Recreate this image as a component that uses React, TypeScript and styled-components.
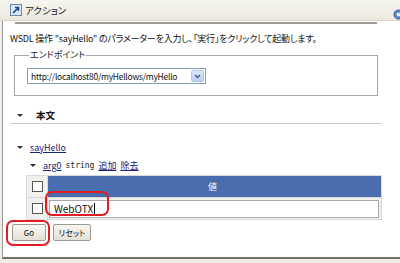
import styled, { createGlobalStyle } from "styled-components";

const GlobalStyle = createGlobalStyle`
  html, body {
    margin: 0;
    padding: 0;
    background: #ffffff;
  }
  body {
    font-family: "Noto Sans CJK JP", "DejaVu Sans", sans-serif;
    font-size: 9px;
    color: #111;
    font-feature-settings: "palt";
  }
`;

const Window = styled.div`
  width: 400px;
  height: 263px;
  background: #efede4;
  display: flex;
  flex-direction: column;
  overflow: hidden;
  position: relative;
`;

const TitleBar = styled.div`
  height: 20px;
  flex: none;
  display: flex;
  align-items: center;
  gap: 3px;
  padding-left: 10px;
  background: linear-gradient(#f6f5ef, #ebe9df);
  border-bottom: 1px solid #d9d6c9;
`;

const TitleText = styled.span`
  font-size: 9.5px;
  color: #222;
`;

const CornerIcon = styled.div`
  margin-left: auto;
  margin-right: -4px;
  margin-top: 8px;
  display: flex;
`;

const Panel = styled.div`
  flex: 1;
  margin-left: 2px;
  margin-bottom: 4px;
  background: #ffffff;
  border-left: 1px solid #9a9a9a;
  border-bottom: 2px solid #74726a;
  display: flex;
  flex-direction: column;
  position: relative;
`;

const TopRule = styled.div`
  height: 2px;
  margin: 1px 23px 0 12px;
  background: #9e9c96;
`;

const Description = styled.div`
  margin: 8px 0 0 7px;
  line-height: 14px;
  white-space: nowrap;
  letter-spacing: -0.2px;
`;

const Group = styled.fieldset`
  margin: 4px 22px 0 11px;
  padding: 8px 0 11px 12px;
  border: 1px solid #a7a7a7;
  box-shadow: inset 1px 1px 0 #fff, 1px 1px 0 #fff;
  min-width: 0;

  legend {
    padding: 0 1px;
    margin-left: 2px;
    line-height: 10px;
    color: #222;
  }
`;

const Select = styled.div`
  width: 179px;
  height: 16px;
  box-sizing: border-box;
  border: 1px solid #7f9db9;
  display: flex;
  align-items: center;
  padding-left: 3px;
  background: #fff;
`;

const SelectText = styled.span`
  flex: 1;
  white-space: nowrap;
  overflow: hidden;
  font-size: 8.5px;
  letter-spacing: -0.25px;
`;

const DropButton = styled.div`
  width: 13px;
  height: 12px;
  margin-right: 1px;
  border-radius: 2px;
  background: linear-gradient(#dde7fb, #b9cdf3);
  border: 1px solid #b3c6ea;
  box-sizing: border-box;
  display: flex;
  align-items: center;
  justify-content: center;
`;

const SectionHead = styled.div`
  display: flex;
  align-items: center;
  margin: 11px 18px 0 7px;
  padding: 1px 0 1px 7px;
  height: 14px;
  border-bottom: 1px solid #c9c9c9;
  gap: 10px;
  font-weight: bold;
  font-size: 9.5px;
`;

const TreeRow = styled.div<{ $indent: number; $top: number }>`
  display: flex;
  align-items: center;
  gap: 4px;
  height: 12px;
  margin-top: ${(p) => p.$top}px;
  padding-left: ${(p) => p.$indent}px;
  white-space: nowrap;
`;

const Twistie = styled.span`
  width: 0;
  height: 0;
  border-left: 3px solid transparent;
  border-right: 3px solid transparent;
  border-top: 3px solid #333;
  margin-right: 3px;
`;

const LinkText = styled.span`
  color: #1b237a;
  text-decoration: underline;
  text-underline-offset: 1px;
`;

const PlainText = styled.span`
  font-family: "DejaVu Sans Mono", monospace;
  font-size: 8px;
  color: #222;
`;

const Table = styled.div`
  margin: 4px 18px 0 23px;
  display: grid;
  grid-template-columns: 20px 1fr;
  grid-template-rows: 21px 21px;
  column-gap: 1px;
  row-gap: 1px;
  background: #d8d8d8;
  border: 1px solid #d8d8d8;
`;

const CheckCell = styled.div`
  background: #f0f0ec;
  display: flex;
  align-items: center;
  justify-content: center;
`;

const Check = styled.span`
  width: 11px;
  height: 11px;
  box-sizing: border-box;
  border: 1px solid #555;
  background: #fff;
`;

const HeaderCell = styled.div`
  background: #4a6db0;
  color: #fff;
  display: flex;
  align-items: center;
  justify-content: center;
  font-size: 9px;
  padding-right: 4px;
`;

const ValueCell = styled.div`
  background: #f0f0ec;
  display: flex;
  align-items: center;
  padding: 0 2px 0 1px;
`;

const Input = styled.div`
  flex: 1;
  height: 18px;
  box-sizing: border-box;
  border: 1px solid #a9a9a9;
  background: #fff;
  display: flex;
  align-items: center;
  padding-left: 4px;
  font-size: 10px;
`;

const Caret = styled.span`
  display: inline-block;
  width: 1px;
  height: 11px;
  background: #000;
  margin-left: 1px;
`;

const ButtonRow = styled.div`
  display: flex;
  gap: 7px;
  margin: 4px 0 0 9px;
`;

const Button = styled.div<{ $w: number }>`
  width: ${(p) => p.$w}px;
  height: 17px;
  box-sizing: border-box;
  border: 1px solid #9d9b90;
  border-radius: 2px;
  background: linear-gradient(#f7f6f1, #e4e1d6);
  display: flex;
  align-items: center;
  justify-content: center;
  font-size: 8px;
`;

const Mark = styled.div<{ $x: number; $y: number; $w: number; $h: number }>`
  position: absolute;
  left: ${(p) => p.$x}px;
  top: ${(p) => p.$y}px;
  width: ${(p) => p.$w}px;
  height: ${(p) => p.$h}px;
  box-sizing: border-box;
  border: 2px solid #e31b23;
  border-radius: 7px;
  pointer-events: none;
`;

const ActionIcon = () => (
  <svg width="12" height="12" viewBox="0 0 12 12">
    <rect x="0.5" y="0.5" width="11" height="11" fill="#dbe6f5" stroke="#6d86b0" />
    <path d="M3 9 L8 4" stroke="#1c3d8c" strokeWidth="1.6" />
    <path d="M5 3.5 H8.5 V7" fill="none" stroke="#1c3d8c" strokeWidth="1.4" />
  </svg>
);

const GlobeIcon = () => (
  <svg width="11" height="11" viewBox="0 0 11 11">
    <circle cx="5.5" cy="5.5" r="4.5" fill="#5f8fd0" stroke="#2d5596" />
    <circle cx="5.5" cy="5.5" r="1.8" fill="#e8f0fb" />
  </svg>
);

const Chevron = () => (
  <svg width="7" height="5" viewBox="0 0 7 5">
    <path d="M1 1 L3.5 3.5 L6 1" fill="none" stroke="#4d6185" strokeWidth="1.5" />
  </svg>
);

export default function App() {
  return (
    <>
      <GlobalStyle />
      <Window>
        <TitleBar>
          <ActionIcon />
          <TitleText>アクション</TitleText>
          <CornerIcon>
            <GlobeIcon />
          </CornerIcon>
        </TitleBar>
        <Panel>
          <TopRule />
          <Description>
            WSDL 操作 "sayHello" のパラメーターを入力し、「実行」をクリックして起動します。
          </Description>
          <Group>
            <legend>エンドポイント</legend>
            <Select>
              <SelectText>http://localhost80/myHellows/myHello</SelectText>
              <DropButton>
                <Chevron />
              </DropButton>
            </Select>
          </Group>
          <SectionHead>
            <Twistie />
            本文
          </SectionHead>
          <TreeRow $indent={14} $top={17}>
            <Twistie />
            <LinkText>sayHello</LinkText>
          </TreeRow>
          <TreeRow $indent={27} $top={6}>
            <Twistie />
            <LinkText>arg0</LinkText>
            <PlainText>string</PlainText>
            <LinkText>追加</LinkText>
            <LinkText>除去</LinkText>
          </TreeRow>
          <Table>
            <CheckCell>
              <Check />
            </CheckCell>
            <HeaderCell>値</HeaderCell>
            <CheckCell>
              <Check />
            </CheckCell>
            <ValueCell>
              <Input>
                WebOTX
                <Caret />
              </Input>
            </ValueCell>
          </Table>
          <ButtonRow>
            <Button $w={34}>Go</Button>
            <Button $w={38}>リセット</Button>
          </ButtonRow>
          <Mark $x={42} $y={170} $w={64} $h={25} />
          <Mark $x={3} $y={199} $w={44} $h={26} />
        </Panel>
      </Window>
    </>
  );
}
